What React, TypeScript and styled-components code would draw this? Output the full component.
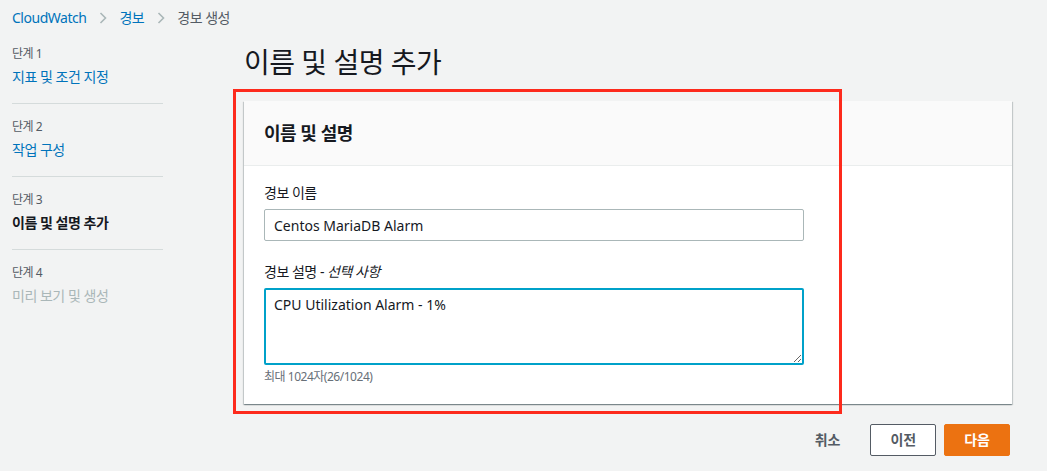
import React from 'react';
import styled, { createGlobalStyle } from 'styled-components';

const GlobalStyle = createGlobalStyle`
  html, body {
    margin: 0;
    padding: 0;
    background: #f2f3f3;
    font-family: "Noto Sans", "Noto Sans CJK KR", sans-serif;
    letter-spacing: -0.03em;
    color: #16191f;
  }
`;

const Page = styled.div`
  width: 1047px;
  height: 471px;
  overflow: hidden;
`;

const Breadcrumbs = styled.nav`
  display: flex;
  align-items: center;
  height: 36px;
  padding-left: 12px;
  font-size: 14px;
`;

const Crumb = styled.span<{ $current?: boolean }>`
  color: ${(p) => (p.$current ? '#545b64' : '#0073bb')};
  line-height: 20px;
`;

const Chevron = styled.svg`
  width: 8px;
  height: 12px;
  margin: 0 12px 0 13px;
`;

const Body = styled.div`
  display: flex;
  align-items: flex-start;
`;

const Sidebar = styled.ol`
  list-style: none;
  margin: 0 0 0 12px;
  padding: 10px 0 0;
  width: 151px;
  flex-shrink: 0;
`;

const Step = styled.li`
  padding: 0 0 16px;
  margin-bottom: 15px;
  border-bottom: 1px solid #d5dbdb;

  &:last-child {
    border-bottom: none;
  }
`;

const StepLabel = styled.div`
  font-size: 12px;
  line-height: 16px;
  color: #545b64;
  margin-bottom: 5px;
`;

const StepTitle = styled.div<{ $state: 'link' | 'current' | 'disabled' }>`
  font-size: 14px;
  line-height: 20px;
  font-weight: ${(p) => (p.$state === 'current' ? 700 : 400)};
  color: ${(p) =>
    p.$state === 'link' ? '#0073bb' : p.$state === 'current' ? '#16191f' : '#aab7b8'};
`;

const Main = styled.main`
  margin-left: 81px;
  width: 768px;
`;

const Title = styled.h1`
  margin: 8px 0 21px;
  font-size: 28px;
  line-height: 36px;
  font-weight: 400;
  color: #16191f;
`;

const CardWrap = styled.div`
  position: relative;
`;

const Card = styled.section`
  background: #fff;
  box-shadow: 0 1px 1px 0 rgba(0, 28, 36, 0.3), 1px 1px 1px 0 rgba(0, 28, 36, 0.15),
    -1px 1px 1px 0 rgba(0, 28, 36, 0.15);
`;

const CardHeader = styled.header`
  height: 64px;
  display: flex;
  align-items: center;
  padding: 0 20px;
  background: #fafafa;
  border-bottom: 1px solid #eaeded;
`;

const CardTitle = styled.h2`
  margin: 0;
  font-size: 18px;
  line-height: 24px;
  font-weight: 700;
`;

const CardBody = styled.div`
  padding: 17px 20px 19px;
`;

const Field = styled.div`
  margin-bottom: 21px;

  &:last-child {
    margin-bottom: 0;
  }
`;

const Label = styled.label`
  display: block;
  font-size: 14px;
  line-height: 20px;
  color: #16191f;
  margin-bottom: 6px;

  em {
    font-style: italic;
  }
`;

const TextInput = styled.input`
  display: block;
  box-sizing: border-box;
  width: 540px;
  height: 32px;
  padding: 4px 9px;
  border: 1px solid #aab7b8;
  border-radius: 2px;
  font: inherit;
  font-size: 14px;
  color: #16191f;
  outline: none;
`;

const TextArea = styled.textarea`
  display: block;
  box-sizing: border-box;
  width: 540px;
  height: 77px;
  padding: 4px 8px;
  border: 2px solid #00a1c9;
  border-radius: 2px;
  font: inherit;
  font-size: 14px;
  line-height: 22px;
  color: #16191f;
  outline: none;
`;

const Hint = styled.div`
  margin-top: 4px;
  font-size: 12px;
  line-height: 16px;
  color: #687078;
`;

const Annotation = styled.div`
  position: absolute;
  left: -11px;
  top: -12px;
  width: 609px;
  height: 325px;
  box-sizing: border-box;
  border: 3px solid #fd2a1c;
  pointer-events: none;
`;

const Actions = styled.div`
  display: flex;
  justify-content: flex-end;
  align-items: center;
  gap: 8px;
  margin: 20px 2px 0 0;
`;

const Button = styled.button<{ $variant: 'link' | 'normal' | 'primary' }>`
  box-sizing: border-box;
  height: 32px;
  padding: 0 19px;
  margin-right: ${(p) => (p.$variant === 'link' ? '2px' : '0')};
  border-radius: 2px;
  font: inherit;
  font-size: 14px;
  font-weight: 700;
  line-height: 20px;
  border: 1px solid
    ${(p) => (p.$variant === 'normal' ? '#545b64' : p.$variant === 'primary' ? '#ec7211' : 'transparent')};
  background: ${(p) => (p.$variant === 'primary' ? '#ec7211' : p.$variant === 'normal' ? '#fff' : 'transparent')};
  color: ${(p) => (p.$variant === 'primary' ? '#fff' : '#545b64')};
`;

const ChevronIcon = () => (
  <Chevron viewBox="0 0 8 12">
    <polyline points="1.5,1 6.5,6 1.5,11" fill="none" stroke="#aab7b8" strokeWidth="1.6" />
  </Chevron>
);

const steps: { label: string; title: string; state: 'link' | 'current' | 'disabled' }[] = [
  { label: '단계 1', title: '지표 및 조건 지정', state: 'link' },
  { label: '단계 2', title: '작업 구성', state: 'link' },
  { label: '단계 3', title: '이름 및 설명 추가', state: 'current' },
  { label: '단계 4', title: '미리 보기 및 생성', state: 'disabled' },
];

const App = () => {
  return (
    <Page>
      <GlobalStyle />
      <Breadcrumbs>
        <Crumb>CloudWatch</Crumb>
        <ChevronIcon />
        <Crumb>경보</Crumb>
        <ChevronIcon />
        <Crumb $current>경보 생성</Crumb>
      </Breadcrumbs>
      <Body>
        <Sidebar>
          {steps.map((s) => (
            <Step key={s.label}>
              <StepLabel>{s.label}</StepLabel>
              <StepTitle $state={s.state}>{s.title}</StepTitle>
            </Step>
          ))}
        </Sidebar>
        <Main>
          <Title>이름 및 설명 추가</Title>
          <CardWrap>
            <Card>
              <CardHeader>
                <CardTitle>이름 및 설명</CardTitle>
              </CardHeader>
              <CardBody>
                <Field>
                  <Label>경보 이름</Label>
                  <TextInput readOnly value="Centos MariaDB Alarm" />
                </Field>
                <Field>
                  <Label>
                    경보 설명 - <em>선택 사항</em>
                  </Label>
                  <TextArea readOnly value="CPU Utilization Alarm - 1%" />
                  <Hint>최대 1024자(26/1024)</Hint>
                </Field>
              </CardBody>
            </Card>
            <Annotation />
          </CardWrap>
          <Actions>
            <Button $variant="link">취소</Button>
            <Button $variant="normal">이전</Button>
            <Button $variant="primary">다음</Button>
          </Actions>
        </Main>
      </Body>
    </Page>
  );
};

export default App;
